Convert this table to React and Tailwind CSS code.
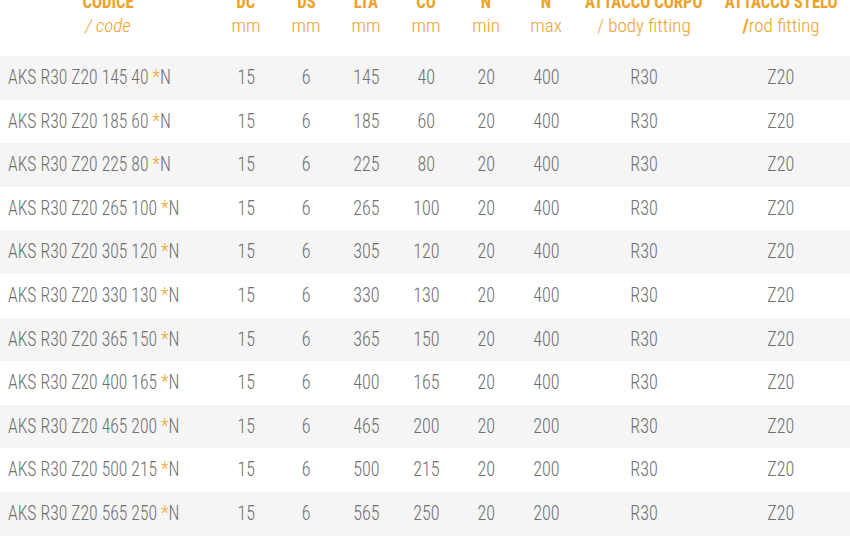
const rows = [
  ['145', '40', '400'],
  ['185', '60', '400'],
  ['225', '80', '400'],
  ['265', '100', '400'],
  ['305', '120', '400'],
  ['330', '130', '400'],
  ['365', '150', '400'],
  ['400', '165', '400'],
  ['465', '200', '200'],
  ['500', '215', '200'],
  ['565', '250', '200'],
]

const cols = 'grid grid-cols-[216px_60px_60px_60px_60px_60px_60px_136px_138px]'

function Head({ top, sub, italic }) {
  return (
    <div className="flex flex-col items-center">
      <span className="scale-x-[0.88] text-[19px] leading-[18px] font-bold whitespace-nowrap uppercase">{top}</span>
      <span className={`mt-[4px] text-[19px] leading-[22px] font-light whitespace-nowrap ${italic ? 'italic' : ''}`}>{sub}</span>
    </div>
  )
}

function Cell({ children }) {
  return (
    <div className="flex justify-center">
      <span className="inline-block scale-x-[0.86]">{children}</span>
    </div>
  )
}

export default function App() {
  return (
    <div
      className="h-[550px] w-[850px] overflow-hidden bg-white"
      style={{ fontFamily: '"Roboto Condensed", "DejaVu Sans Condensed", "Liberation Sans Narrow", Roboto, sans-serif' }}
    >
      <div className={`${cols} mt-[-7px] h-[63px] text-[#f0a128]`}>
        <Head top="Codice" sub="/ code" italic />
        <Head top="DC" sub="mm" />
        <Head top="DS" sub="mm" />
        <Head top="LTA" sub="mm" />
        <Head top="CO" sub="mm" />
        <Head top="N" sub="min" />
        <Head top="N" sub="max" />
        <Head top="Attacco corpo" sub="/ body fitting" />
        <Head
          top="Attacco stelo"
          sub={
            <>
              <span className="font-bold">/</span>rod fitting
            </>
          }
        />
      </div>
      {rows.map(([lta, co, nmax], i) => (
        <div
          key={lta}
          className={`${cols} h-[43.6px] items-center text-[21px] font-light text-[#6f6f6f] ${i % 2 === 0 ? 'bg-[#f5f5f5]' : 'bg-white'}`}
        >
          <div className="pl-2">
            <span className="inline-block origin-left scale-x-[0.84] whitespace-nowrap">
              AKS R30 Z20 {lta} {co} <span className="text-[#f2a833]">*</span>N
            </span>
          </div>
          <Cell>15</Cell>
          <Cell>6</Cell>
          <Cell>{lta}</Cell>
          <Cell>{co}</Cell>
          <Cell>20</Cell>
          <Cell>{nmax}</Cell>
          <Cell>R30</Cell>
          <Cell>Z20</Cell>
        </div>
      ))}
    </div>
  )
}
